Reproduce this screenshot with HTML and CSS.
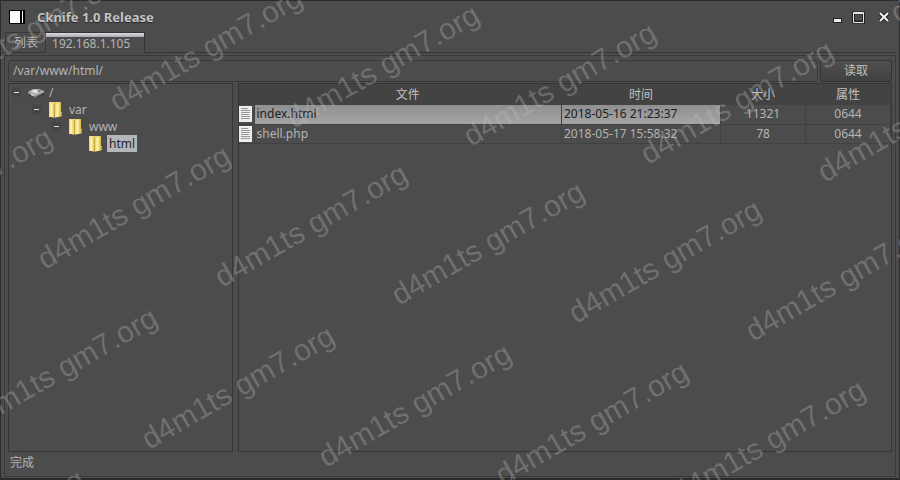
FILE: index.html
```
<!DOCTYPE html>
<html lang="zh">
<head>
<meta charset="utf-8">
<title>Cknife 1.0 Release</title>
<link rel="stylesheet" href="styles.css">
</head>
<body>
<svg class="symbols" aria-hidden="true">
  <defs>
    <linearGradient id="fold" x1="0" x2="1"><stop offset="0" stop-color="#f5e794"/><stop offset="1" stop-color="#dcc04c"/></linearGradient>
    <linearGradient id="front" x1="0" x2="1"><stop offset="0" stop-color="#e8d16b"/><stop offset=".5" stop-color="#fff5b4"/><stop offset="1" stop-color="#dfc456"/></linearGradient>
    <symbol id="folder" viewBox="0 0 16 16">
      <path fill="url(#fold)" d="M1 0h12v10h1v4l-3 1H1z"/>
      <path fill="#c9ab3d" d="M6 1h1v14H6z"/>
      <path fill="url(#front)" d="M1 0l5 2v14l-5-2z"/>
      <path fill="url(#front)" d="M7 2l5-2v14l-5 2z"/>
      <path fill="#4f9db5" d="M13 11h1v2h-1z"/>
    </symbol>
    <symbol id="drive" viewBox="0 0 16 16">
      <path fill="#262626" d="M0 8l8 4 8-4v2l-8 3-8-3z"/>
      <path fill="#858585" d="M0 7l8 3v3L0 9z"/>
      <path fill="#555" d="M16 6l-8 4v3l8-4z"/>
      <path fill="#b5b5b5" d="M0 7l5-3h6l5 2v1l-8 4z"/>
      <path fill="#ededed" d="M3 6l4-1 4 1-3 2z"/>
      <path fill="#777" d="M11 5l3 1-3 1-2-1z"/>
      <path fill="#eee" d="M3 9l3 1v1L3 10z"/>
    </symbol>
    <symbol id="doc" viewBox="0 0 13 16">
      <path fill="#ededed" d="M0 0h13v16H0z"/>
      <path stroke="#999" d="M2 2.500h7M2 4.500h9M2 6.500h9M2 8.500h8M2 10.500h9M2 12.500h9"/>
    </symbol>
  </defs>
</svg>
<div class="window">
  <header class="titlebar">
    <svg class="app-icon" viewBox="0 0 16 14" aria-hidden="true"><path fill="#000" d="M0 0h16v14H0z"/><path fill="#fff" d="M1 1h10v12H1zM13 1h1v12h-1z"/></svg>
    <h1>Cknife 1.0 Release</h1>
    <div class="controls">
      <button aria-label="最小化"><svg viewBox="0 0 14 14"><path fill="#222" d="M3 8h9v5H3z"/><path fill="#eee" d="M4 9h7v3H4z"/></svg></button>
      <button aria-label="最大化"><svg viewBox="0 0 14 14"><path fill="none" stroke="#222" stroke-width="3" d="M2.500 3h10v9h-10z"/><path fill="none" stroke="#e4e4e4" d="M2.500 2.500h10v10h-10z"/><path stroke="#e4e4e4" d="M2 3.500h11"/></svg></button>
      <button aria-label="关闭"><svg viewBox="0 0 14 14"><path stroke="#222" stroke-width="4" d="M3 3l8 8M11 3l-8 8"/><path stroke="#f2f2f2" stroke-width="2" d="M3 3l8 8M11 3l-8 8"/></svg></button>
    </div>
  </header>
  <nav class="tabs" role="tablist">
    <button class="tab" role="tab" aria-selected="false">列表</button>
    <button class="tab active" role="tab" aria-selected="true">192.168.1.105</button>
  </nav>
  <main class="page">
    <form class="pathbar">
      <input type="text" aria-label="路径" value="/var/www/html/">
      <button type="button">读取</button>
    </form>
    <div class="split">
      <ul class="pane tree">
        <li><button class="toggle" aria-label="折叠"></button><svg aria-hidden="true"><use href="#drive"/></svg><span>/</span></li>
        <li class="level-1"><button class="toggle" aria-label="折叠"></button><svg aria-hidden="true"><use href="#folder"/></svg><span>var</span></li>
        <li class="level-2"><button class="toggle" aria-label="折叠"></button><svg aria-hidden="true"><use href="#folder"/></svg><span>www</span></li>
        <li class="level-4"><svg aria-hidden="true"><use href="#folder"/></svg><span class="selected">html</span></li>
      </ul>
      <section class="pane">
        <table>
          <colgroup><col class="c-icon"><col class="c-file"><col class="c-time"><col class="c-small"><col class="c-small"></colgroup>
          <thead><tr><th></th><th>文件</th><th>时间</th><th>大小</th><th>属性</th></tr></thead>
          <tbody>
            <tr class="current"><td><svg aria-hidden="true"><use href="#doc"/></svg></td><td>index.html</td><td>2018-05-16 21:23:37</td><td>11321</td><td>0644</td></tr>
            <tr><td><svg aria-hidden="true"><use href="#doc"/></svg></td><td>shell.php</td><td>2018-05-17 15:58:32</td><td>78</td><td>0644</td></tr>
          </tbody>
        </table>
      </section>
    </div>
    <footer>完成</footer>
  </main>
</div>
<svg class="watermark" aria-hidden="true">
  <g transform="translate(2 2)">
  <text transform="translate(-62 92) rotate(-30)">d4m1ts gm7.org</text>
  <text transform="translate(115 110) rotate(-30)">d4m1ts gm7.org</text>
  <text transform="translate(292 127) rotate(-30)">d4m1ts gm7.org</text>
  <text transform="translate(469 145) rotate(-30)">d4m1ts gm7.org</text>
  <text transform="translate(646 163) rotate(-30)">d4m1ts gm7.org</text>
  <text transform="translate(823 181) rotate(-30)">d4m1ts gm7.org</text>
  <text transform="translate(896 22) rotate(-30)">d4m1ts gm7.org</text>
  <text transform="translate(-135 250) rotate(-30)">d4m1ts gm7.org</text>
  <text transform="translate(43 268) rotate(-30)">d4m1ts gm7.org</text>
  <text transform="translate(220 286) rotate(-30)">d4m1ts gm7.org</text>
  <text transform="translate(397 304) rotate(-30)">d4m1ts gm7.org</text>
  <text transform="translate(574 322) rotate(-30)">d4m1ts gm7.org</text>
  <text transform="translate(751 340) rotate(-30)">d4m1ts gm7.org</text>
  <text transform="translate(-30 430) rotate(-30)">d4m1ts gm7.org</text>
  <text transform="translate(147 448) rotate(-30)">d4m1ts gm7.org</text>
  <text transform="translate(324 466) rotate(-30)">d4m1ts gm7.org</text>
  <text transform="translate(501 484) rotate(-30)">d4m1ts gm7.org</text>
  <text transform="translate(678 502) rotate(-30)">d4m1ts gm7.org</text>
  <text transform="translate(-103 592) rotate(-30)">d4m1ts gm7.org</text>
  </g>
</svg>
</body>
</html>
```
FILE: styles.css
```
* { box-sizing: border-box; }
body {
  margin: 0;
  font: 12px/18px "Noto Sans", "Noto Sans CJK SC", sans-serif;
  color: #b4b4b4;
  background: #4c4c4c;
}
button, input { font: inherit; color: inherit; margin: 0; padding: 0; border: 0; background: none; }
.symbols { position: absolute; width: 0; height: 0; }
.window {
  display: flex;
  flex-direction: column;
  min-height: 100vh;
  padding: 0 2px 1px 1px;
  border: 1px solid #2c2a2b;
  border-width: 1px 1px 2px;
  background: #4c4c4c;
}
.titlebar { display: flex; align-items: center; height: 31px; padding: 0 6px 0 7px; }
.app-icon { width: 16px; height: 14px; }
h1 { flex: 1; margin: 0 0 0 12px; font-size: 13px; line-height: 18px; color: #c2c2c2; text-shadow: 0 1px 1px #292929; }
.controls { display: flex; gap: 7px; }
.controls button { display: flex; width: 14px; height: 14px; }
.controls button:last-child { margin-left: 5px; }
.controls svg { width: 14px; height: 14px; }
.tabs { display: flex; height: 21px; padding-left: 3px; border-bottom: 1px solid #353535; }
.tab { padding: 0 7px 0 8px; border-top: 1px solid #393939; border-left: 1px solid #393939; line-height: 20px; }
.tab.active {
  height: 21px;
  padding: 0 14px 0 6px;
  border: 1px solid #353535;
  border-bottom: 0;
  line-height: 17px;
  background: linear-gradient(#dedce2, #aaa8ae 4px, #4c4c4c 4px);
}
.page {
  display: flex;
  flex: 1;
  flex-direction: column;
  margin: 2px 1px 0 2px;
  padding: 4px 3px 0;
  border: 1px solid #3a3a3a;
}
.pathbar { display: flex; gap: 2px; height: 22px; margin-bottom: 1px; }
.pathbar input { flex: 1; min-width: 0; padding: 0 4px; border: 1px solid #393939; border-radius: 3px; }
.pathbar button { width: 72px; border: 1px solid #333; border-radius: 2px; background: linear-gradient(#505050, #404040); color: #c0c0c0; }
.split { display: grid; grid-template-columns: 225px 1fr; gap: 5px; flex: 1; }
.pane { border: 1px solid #363636; }
.tree { margin: 0; padding: 0 0 0 3px; list-style: none; }
.tree li { display: flex; align-items: center; height: 17px; }
.tree .level-1 { margin-left: 20px; }
.tree .level-2 { margin-left: 40px; }
.tree .level-4 { margin-left: 76px; }
.toggle {
  flex: none;
  width: 9px;
  height: 9px;
  margin-right: 7px;
  border: 2px solid #444;
  border-width: 4px 2px;
  border-radius: 2px;
  background: #ddd;
}
.tree svg { flex: none; width: 16px; height: 16px; margin-right: 3px; }
.tree span { padding: 0 2px; line-height: 17px; }
.tree .selected { background: #b3b6ba; color: #252525; }
table { width: 100%; border-collapse: collapse; table-layout: fixed; }
.c-icon { width: 15px; }
.c-time { width: 159px; }
.c-small { width: 85px; }
th, td { padding: 0; height: 19px; font-weight: normal; text-align: center; line-height: 18px; }
th { height: 21px; background: #434343; color: #c0c0c0; }
td { border-right: 1px solid #414141; border-bottom: 1px solid #414141; }
td:first-child { text-align: left; }
td svg { display: block; width: 13px; height: 16px; }
td:nth-child(2), td:nth-child(3) { padding-left: 2px; text-align: left; }
.current td:nth-child(2), .current td:nth-child(3) { background: linear-gradient(#8f8f8f, #a4a4a4); color: #202020; }
footer { height: 24px; padding: 1px 2px; line-height: 20px; }
.watermark { position: absolute; inset: 0; width: 100%; height: 100%; overflow: hidden; pointer-events: none; }
.watermark text { font-family: "Liberation Sans", sans-serif; font-size: 30px; fill: #c0c0c0; fill-opacity: .31; }
```
